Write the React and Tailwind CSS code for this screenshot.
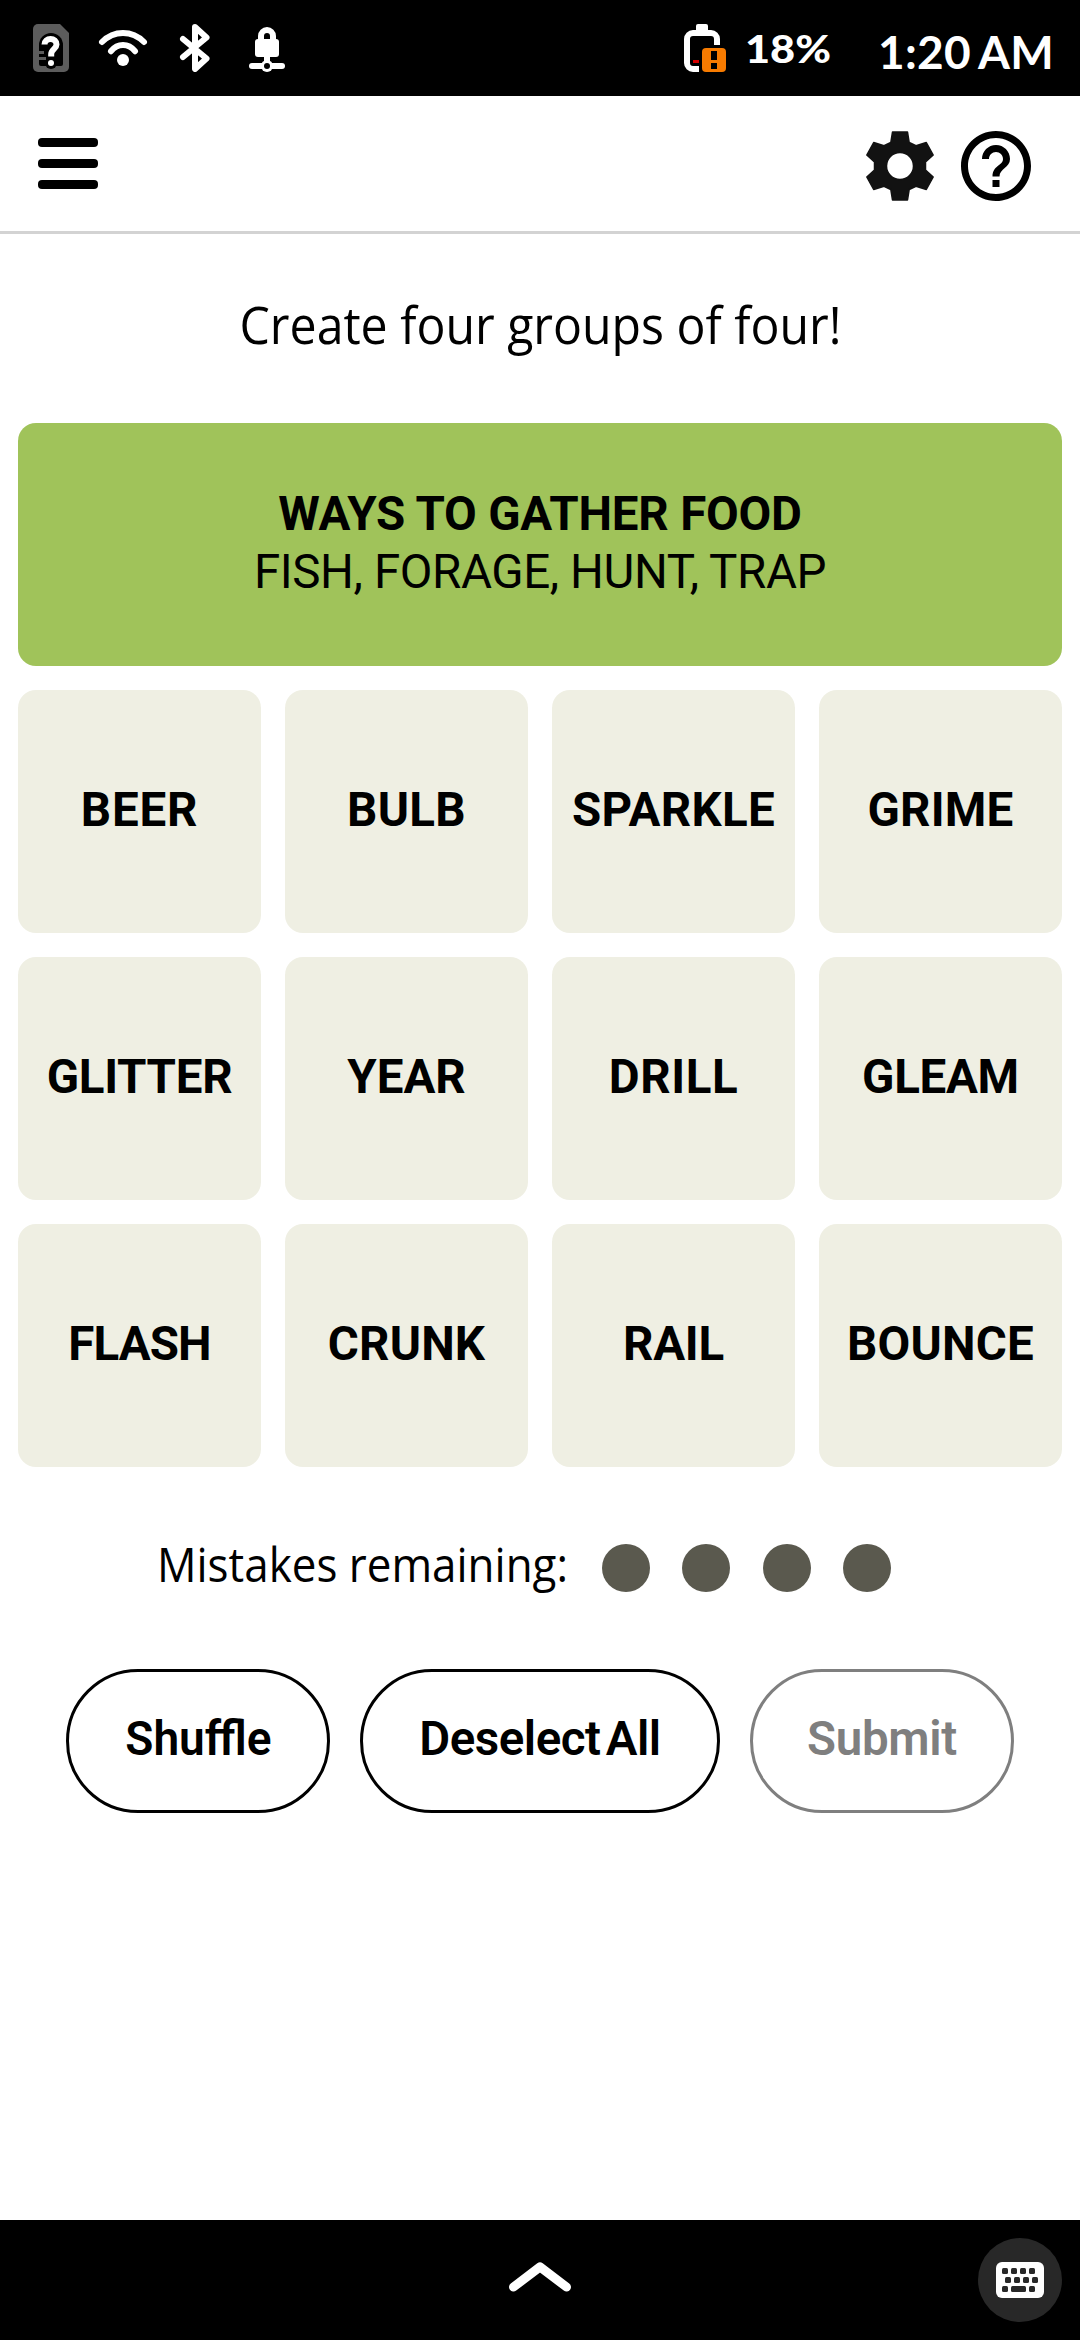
import { MdHelpOutline } from "react-icons/md";

const words = [
  { text: "BEER", tracking: "tracking-[0.8px]" },
  { text: "BULB", tracking: "tracking-[0.3px]" },
  { text: "SPARKLE", tracking: "tracking-[0.3px]" },
  { text: "GRIME", tracking: "tracking-[0.2px]" },
  { text: "GLITTER", tracking: "tracking-[-0.3px]" },
  { text: "YEAR", tracking: "tracking-normal" },
  { text: "DRILL", tracking: "tracking-[0.6px]" },
  { text: "GLEAM", tracking: "tracking-[-0.3px]" },
  { text: "FLASH", tracking: "tracking-[-0.9px]" },
  { text: "CRUNK", tracking: "tracking-[0.2px]" },
  { text: "RAIL", tracking: "tracking-[-0.2px]" },
  { text: "BOUNCE", tracking: "tracking-[0.2px]" },
];

function StatusIcons() {
  return (
    <svg className="ml-[33px] h-12 w-[252px]" viewBox="33 24 252 48" fill="none">
      {/* unknown SIM */}
      <path d="M38 24h22l9 9v34a5 5 0 0 1-5 5H38a5 5 0 0 1-5-5V29a5 5 0 0 1 5-5Z" fill="#5c5c5c" />
      <path d="M39 45a12 12 0 0 1 24 0v19a2 2 0 0 1-2 2H41a2 2 0 0 1-2-2Z" fill="#000" />
      <path d="M39 51h5v3h-5zM39 57h7v3h-7z" fill="#5c5c5c" />
      <circle cx="51" cy="63" r="6" fill="#000" />
      <path d="M44.500 44.500c0-3.500 2.700-5.500 6-5.500 3.500 0 6 2.200 6 5.500 0 4.500-5.300 4.800-5.300 9.500v2.500" stroke="#fff" strokeWidth="6" />
      <circle cx="51" cy="63" r="3" fill="#fff" />
      {/* wifi */}
      <path d="M102 42Q111 33 123 33T144 42M111 51.200Q116 45 123 45T135 51.200" stroke="#fff" strokeWidth="6" strokeLinecap="round" />
      <circle cx="123" cy="60" r="6" fill="#fff" />
      {/* bluetooth */}
      <path d="M183 39 206.500 58.500 195 69V27L206.500 37.500 183 57" stroke="#fff" strokeWidth="6" strokeLinecap="round" strokeLinejoin="round" />
      {/* vpn lock */}
      <path d="M261 42v-6a6 6 0 0 1 12 0v6M267 56v6" stroke="#fff" strokeWidth="6" />
      <rect x="255" y="39" width="24" height="18" rx="3" fill="#fff" />
      <path d="M252 66h30" stroke="#fff" strokeWidth="6" strokeLinecap="round" />
      <circle cx="267" cy="66" r="6" fill="#fff" />
      <circle cx="267" cy="66" r="3" fill="#000" />
    </svg>
  );
}

function Battery() {
  return (
    <svg className="h-12 w-[42px]" viewBox="684 24 42 48" fill="none">
      <path d="M699 69h-6a6 6 0 0 1-6-6V39a6 6 0 0 1 6-6h18a6 6 0 0 1 6 6v6" stroke="#fff" strokeWidth="6" />
      <rect x="696" y="24" width="12" height="9" rx="2" fill="#fff" />
      <path d="M693 60h6v3h-6z" fill="#d50000" />
      <rect x="702" y="48" width="24" height="24" rx="4" fill="#f77b00" />
      <path d="M711 51h6v9h-6zM711 63h6v6h-6z" fill="#000" />
    </svg>
  );
}

function Gear() {
  return (
    <svg className="size-[84px]" viewBox="-42 -42 84 84" fill="#121212">
      <path
        d="M-7.500-34H7.500L9.200-23.500 16-20.300 26.300-23.500 33.200-11 25.500-4V4L33.200 11 26.300 23.500 16 20.300 9.200 23.500 7.500 34H-7.500L-9.200 23.500-16 20.300-26.300 23.500-33.200 11-25.500 4V-4L-33.200-11-26.300-23.500-16-20.300-9.200-23.500ZM0-13.500A13.500 13.500 0 1 0 0 13.500 13.500 13.500 0 1 0 0-13.500Z"
        fillRule="evenodd"
        stroke="#121212"
        strokeWidth="1.500"
        strokeLinejoin="round"
      />
    </svg>
  );
}

function StatusBar() {
  return (
    <div className="flex h-24 items-center bg-black font-['Lato',sans-serif] text-white">
      <StatusIcons />
      <div className="ml-[399px] flex items-center">
        <Battery />
        <span className="ml-[19px] w-[90px] origin-left scale-x-[1.17] pt-px text-[37px] leading-none font-black whitespace-nowrap">18%</span>
        <span className="ml-[43px] pt-[8px] text-[46px] leading-none font-bold tracking-[0.3px] whitespace-nowrap [word-spacing:-3px]">1:20 AM</span>
      </div>
    </div>
  );
}

function Header() {
  return (
    <header className="flex h-[138px] items-center justify-between border-b-[3px] border-[#d3d3d3] pr-[42px] pl-[38px]">
      <div className="flex w-[60px] flex-col gap-3">
        <span className="h-[9px] rounded-[4px] bg-black" />
        <span className="h-[9px] rounded-[4px] bg-black" />
        <span className="h-[9px] rounded-[4px] bg-black" />
      </div>
      <div className="flex gap-3 pt-[5px]">
        <Gear />
        <MdHelpOutline className="size-[84px] text-black" />
      </div>
    </header>
  );
}

export default function App() {
  return (
    <div className="flex h-[2340px] w-[1080px] flex-col overflow-hidden bg-white font-['Roboto',sans-serif] text-black">
      <StatusBar />
      <Header />
      <p className="flex h-[189px] items-center justify-center pb-[8px] font-['Open_Sans',sans-serif] text-[51px] whitespace-nowrap">
        <span className="scale-x-[0.945]">Create four groups of four!</span>
      </p>
      <main className="grid grid-cols-4 gap-6 px-[18px]">
        <div className="col-span-4 flex h-[243px] flex-col items-center justify-center rounded-[18px] bg-[#a0c35a] pb-[3px] text-[47.500px] leading-[58px]">
          <span className="font-bold tracking-[-0.2px] whitespace-nowrap">WAYS TO GATHER FOOD</span>
          <span className="tracking-[-0.400px] whitespace-nowrap">FISH, FORAGE, HUNT, TRAP</span>
        </div>
        {words.map((w) => (
          <button key={w.text} className={`flex h-[243px] items-center justify-center rounded-[18px] bg-[#efefe3] pb-[2px] text-[47.500px] leading-none font-bold ${w.tracking}`}>
            {w.text}
          </button>
        ))}
      </main>
      <div className="mt-[60px] flex h-[82px] items-center pl-[157px]">
        <div className="w-[445px] pb-[7px] font-['Open_Sans',sans-serif] text-[47px] leading-none whitespace-nowrap">
          <span className="inline-block origin-left scale-x-[0.935]">Mistakes remaining:</span>
        </div>
        <div className="flex gap-[32.400px]">
          {[0, 1, 2, 3].map((i) => (
            <span key={i} className="size-12 rounded-full bg-[#5a594e]" />
          ))}
        </div>
      </div>
      <div className="mt-[60px] flex gap-[30px] px-[66px] text-[47.500px] leading-none font-semibold">
        <button className="h-36 w-[264px] rounded-full border-[3px] border-black pb-[2px]">
          <span className="inline-block scale-x-[0.97]">Shuffle</span>
        </button>
        <button className="h-36 w-[360px] rounded-full border-[3px] border-black pb-[2px] tracking-[-0.5px] whitespace-nowrap [word-spacing:-6px]">Deselect All</button>
        <button className="h-36 w-[264px] rounded-full border-[3px] border-[#7f7f7f] pb-[2px] tracking-[-0.3px] text-[#7f7f7f]">Submit</button>
      </div>
      <nav className="mt-auto flex h-[120px] items-center justify-end bg-black pr-[18px]">
        <svg className="mr-[407px] mb-[6px] h-[30px] w-[62px]" viewBox="0 0 62 30" fill="none">
          <path d="M4.500 25 31 4.800 57.500 25" stroke="#fff" strokeWidth="9" strokeLinecap="round" strokeLinejoin="round" />
        </svg>
        <div className="flex size-[84px] items-center justify-center rounded-full bg-[#282828]">
          <svg className="h-9 w-12" viewBox="0 0 48 36">
            <rect width="48" height="36" rx="6" fill="#fff" />
            <g fill="#282828">
              {[6, 15, 24, 33].map((x) => (
                <rect key={x} x={x} y="6" width="6" height="6" rx="1.500" />
              ))}
              {[9, 18, 27, 36].map((x) => (
                <rect key={x} x={x} y="15" width="6" height="6" rx="1.500" />
              ))}
              <rect x="6" y="24" width="6" height="6" rx="1.500" />
              <rect x="15" y="24" width="15" height="6" rx="1.500" />
              <rect x="33" y="24" width="6" height="6" rx="1.500" />
            </g>
          </svg>
        </div>
      </nav>
    </div>
  );
}
